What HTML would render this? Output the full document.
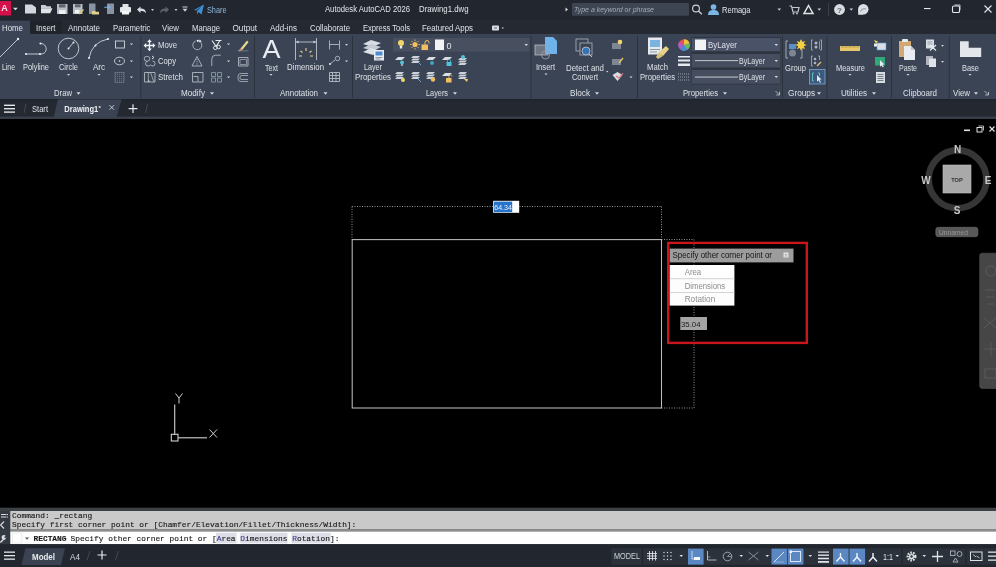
<!DOCTYPE html>
<html><head><meta charset="utf-8">
<style>
*{margin:0;padding:0;box-sizing:border-box}
html,body{width:996px;height:567px;overflow:hidden;background:#000}
body{position:relative;font-family:"Liberation Sans",sans-serif;font-size:7.9px;color:#dfe3ea}
.a{position:absolute}
.t{position:absolute;white-space:nowrap;line-height:1}
#title{left:0;top:0;width:996px;height:34px;background:#22272f}
#ribbon{left:0;top:34px;width:996px;height:65px;background:#3b4453}
#ftabs{left:0;top:99px;width:996px;height:19px;background:#262b34}
#cmd{left:0;top:508px;width:996px;height:37px;background:#3d4345}
#status{left:0;top:545px;width:996px;height:22px;background:#22272f}
.sep{position:absolute;top:36px;width:1px;height:62px;background:#2e3540}
.ptitle{position:absolute;top:88px;line-height:1;white-space:nowrap;color:#d5dae2}
.dd{position:absolute;width:0;height:0;border-left:2.5px solid transparent;border-right:2.5px solid transparent;border-top:3px solid #d0d4da}
svg{position:absolute;overflow:visible}
</style></head><body>
<svg width="996" height="567" viewBox="0 0 996 567" style="position:absolute;left:0;top:0;will-change:transform" font-family="Liberation Sans, sans-serif">
<rect width="996" height="567" fill="#000"/>
<!-- TITLE BAR -->
<rect x="0" y="0" width="996" height="34" fill="#22272f"/>
<rect x="0" y="1" width="11" height="14.5" fill="#d4104a"/>
<text x="4.4" y="11.3" font-size="9" font-weight="bold" fill="#f8e4ec" text-anchor="middle">A</text>
<path d="M13 7.7h4.8l-2.4 2.6z" fill="#dfe3e8"/>
<!-- new -->
<path d="M25 4.5h7l4 3v6h-11z" fill="#d3d7dd"/>
<!-- open -->
<path d="M41 5h4.5l1 1.2h4.5v2h-10z" fill="#c9cdd4"/><path d="M41 8.2h11.5l-2.3 5h-9.2z" fill="#dfe2e7"/>
<!-- save -->
<rect x="57" y="4" width="10.5" height="10" fill="#b9bec6"/><rect x="59" y="4.3" width="6.5" height="3.2" fill="#5d6573"/><rect x="59" y="10.2" width="6.5" height="3.8" fill="#f0f2f4"/>
<!-- save as -->
<rect x="73" y="4" width="9.5" height="10" fill="#b9bec6"/><rect x="75" y="4.3" width="5.5" height="3" fill="#5d6573"/><rect x="75" y="10" width="4.5" height="3.5" fill="#f0f2f4"/><path d="M78.5 13.5l4.5-4.5 1 1-4.5 4.5z" fill="#d9c97a"/>
<!-- doc with folder -->
<rect x="89" y="3.5" width="6.5" height="10.5" rx="0.6" fill="#8a93a3"/><path d="M92 11h3l.8.8h3.2v2.7h-7z" fill="#e0d08a"/>
<!-- doc with arrow -->
<rect x="107" y="3.5" width="7" height="10.5" rx="0.6" fill="#8a93a3"/><path d="M104.3 7.2h5M108 5.8l1.8 1.4-1.8 1.4" stroke="#79b4ea" stroke-width="1.1" fill="none"/>
<!-- print -->
<rect x="122.5" y="4" width="6" height="3" fill="#dfe2e6"/><rect x="120" y="7" width="11" height="5.5" rx="1" fill="#e6e8ec"/><rect x="122" y="11" width="7" height="3.5" fill="#f4f5f7"/>
<!-- undo -->
<path d="M137 9.5l3.5-3v2c3 0 5.5 1 5.5 5-1-2-3-2.5-5.5-2.5v2z" fill="#d7dbe1"/>
<path d="M151 9h3l-1.5 2z" fill="#c9ced6"/>
<!-- redo -->
<path d="M169 9.5l-3.5-3v2c-3 0-5.5 1-5.5 5 1-2 3-2.5 5.5-2.5v2z" fill="#5b626d"/>
<path d="M174.5 9h3l-1.5 2z" fill="#c9ced6"/>
<!-- customize -->
<path d="M182.5 7h5" stroke="#c9ced6" stroke-width="1"/><path d="M182.5 8.7h5l-2.5 3z" fill="#c9ced6"/>
<!-- share -->
<path d="M194 10l10-5.5-2.5 10-3-2.5-1.5 2.5v-3.5l4.5-4.5-5.5 4z" fill="#3d8fd6"/>
<text x="207" y="12.5" font-size="8.4" fill="#8db6dc" textLength="19.5" lengthAdjust="spacingAndGlyphs">Share</text>
<!-- title -->
<text x="325" y="12.3" font-size="8.4" fill="#e3e6eb" textLength="85" lengthAdjust="spacingAndGlyphs">Autodesk AutoCAD 2026</text>
<text x="419" y="12.3" font-size="8.4" fill="#e3e6eb" textLength="49.5" lengthAdjust="spacingAndGlyphs">Drawing1.dwg</text>
<!-- search -->
<path d="M565.5 7.5v4l2.5-2z" fill="#d5d9df"/>
<rect x="572" y="3" width="117" height="12.7" rx="1" fill="#3e4552"/>
<text x="574" y="12" font-size="7.2" font-style="italic" fill="#a3abb7" textLength="80" lengthAdjust="spacingAndGlyphs">Type a keyword or phrase</text>
<circle cx="696" cy="8.5" r="3.4" fill="none" stroke="#d0d4da" stroke-width="1.1"/><path d="M698.5 11l3.3 3.3" stroke="#d0d4da" stroke-width="1.3"/>
<!-- user -->
<circle cx="713.5" cy="7" r="2.8" fill="#79b6e6"/><path d="M708 15c0-4 2.5-5 5.5-5s5.5 1 5.5 5z" fill="#79b6e6"/>
<text x="722" y="12.5" font-size="8.4" fill="#e3e6eb" textLength="28.5" lengthAdjust="spacingAndGlyphs">Remaga</text>
<path d="M777.5 8.5h3.5l-1.75 2.2z" fill="#c9ced6"/>
<!-- cart -->
<path d="M789.5 6h2l1.5 6h5l1-4.5h-6.5" fill="none" stroke="#c3c8cf" stroke-width="1.2"/><circle cx="793.5" cy="13.5" r="0.9" fill="#c3c8cf"/><circle cx="797" cy="13.5" r="0.9" fill="#c3c8cf"/>
<!-- triangle icon -->
<path d="M808.5 5.5l4.5 8h-9z" fill="none" stroke="#e0e3e8" stroke-width="1.5"/>
<path d="M817.5 8.5h3.5l-1.75 2.2z" fill="#c9ced6"/>
<rect x="828" y="3" width="1" height="13" fill="#3a404b"/>
<!-- help -->
<circle cx="839.5" cy="9.5" r="5.4" fill="#d8dbe0"/><text x="839.5" y="12.5" font-size="8" font-weight="bold" fill="#5f6670" text-anchor="middle">?</text>
<path d="M849.5 8.5h3.5l-1.75 2.2z" fill="#c9ced6"/>
<!-- chat -->
<circle cx="863.3" cy="9.3" r="5.2" fill="#dcdfe4"/><path d="M858.2 9.5v5.2h5z" fill="#dcdfe4"/><path d="M860.5 11.5c1-2.5 3.5-3.5 5.5-2.5" stroke="#9aa0a8" stroke-width="1.1" fill="none"/>
<!-- window controls -->
<rect x="924" y="8" width="6.5" height="1.1" fill="#e4e7eb"/>
<rect x="952.5" y="6" width="7" height="6.5" rx="1.3" fill="none" stroke="#e4e7eb" stroke-width="1.1"/><path d="M954.5 5h5.5v5" fill="none" stroke="#e4e7eb" stroke-width="0.8"/>
<path d="M984.5 5.5l7 7M991.5 5.5l-7 7" stroke="#e4e7eb" stroke-width="1.1"/>
<!-- TABS -->
<rect x="0" y="20" width="996" height="14" fill="#242932"/><rect x="30.5" y="20.8" width="31" height="12.8" rx="1.5" fill="#1f232a"/><rect x="0" y="20.7" width="30" height="14" fill="#3b4455"/>
<g font-size="8.4" fill="#dfe3e9">
<text x="2" y="31" textLength="21" lengthAdjust="spacingAndGlyphs">Home</text>
<text x="36" y="31" textLength="19.5" lengthAdjust="spacingAndGlyphs">Insert</text>
<text x="68" y="31" textLength="32" lengthAdjust="spacingAndGlyphs">Annotate</text>
<text x="113" y="31" textLength="37.5" lengthAdjust="spacingAndGlyphs">Parametric</text>
<text x="162" y="31" textLength="17" lengthAdjust="spacingAndGlyphs">View</text>
<text x="192" y="31" textLength="28" lengthAdjust="spacingAndGlyphs">Manage</text>
<text x="232.5" y="31" textLength="24.5" lengthAdjust="spacingAndGlyphs">Output</text>
<text x="270" y="31" textLength="27" lengthAdjust="spacingAndGlyphs">Add-ins</text>
<text x="310" y="31" textLength="40" lengthAdjust="spacingAndGlyphs">Collaborate</text>
<text x="363" y="31" textLength="47" lengthAdjust="spacingAndGlyphs">Express Tools</text>
<text x="422" y="31" textLength="51" lengthAdjust="spacingAndGlyphs">Featured Apps</text>
</g>
<rect x="492" y="25.5" width="7" height="5" rx="0.8" fill="#d9dde3"/><path d="M494 28h3" stroke="#3b4453" stroke-width="0.8"/>
<path d="M501.5 27.5h2.5l-1.25 1.6z" fill="#c9ced6"/>
<!-- RIBBON -->
<rect x="0" y="34" width="996" height="65" fill="#3b4455"/>
<g fill="#2c323c">
<rect x="140.3" y="36" width="1" height="62"/><rect x="254" y="36" width="1" height="62"/><rect x="352" y="36" width="1" height="62"/>
<rect x="530.5" y="36" width="1" height="62"/><rect x="637" y="36" width="1" height="62"/><rect x="782" y="36" width="1" height="62"/>
<rect x="826.5" y="36" width="1" height="62"/><rect x="891" y="36" width="1" height="62"/><rect x="948.8" y="36" width="1" height="62"/>
</g>
<g fill="#dde1e7" font-size="8.4">
<!-- draw labels -->
<text x="2" y="70.3" textLength="13" lengthAdjust="spacingAndGlyphs">Line</text>
<text x="23" y="70.3" textLength="26" lengthAdjust="spacingAndGlyphs">Polyline</text>
<text x="59" y="70.3" textLength="19" lengthAdjust="spacingAndGlyphs">Circle</text>
<text x="93" y="70.3" textLength="12" lengthAdjust="spacingAndGlyphs">Arc</text>
<text x="54" y="95.7" textLength="18" lengthAdjust="spacingAndGlyphs">Draw</text>
<!-- modify labels -->
<text x="158" y="47.8" textLength="19" lengthAdjust="spacingAndGlyphs">Move</text>
<text x="158" y="64.3" textLength="18" lengthAdjust="spacingAndGlyphs">Copy</text>
<text x="158" y="80.3" textLength="25" lengthAdjust="spacingAndGlyphs">Stretch</text>
<text x="181" y="95.7" textLength="24" lengthAdjust="spacingAndGlyphs">Modify</text>
<!-- annotation -->
<text x="265" y="70.5" textLength="13" lengthAdjust="spacingAndGlyphs">Text</text>
<text x="287" y="70" textLength="37" lengthAdjust="spacingAndGlyphs">Dimension</text>
<text x="280" y="95.7" textLength="38" lengthAdjust="spacingAndGlyphs">Annotation</text>
<!-- layers -->
<text x="364" y="70" textLength="18" lengthAdjust="spacingAndGlyphs">Layer</text>
<text x="355" y="79.5" textLength="36" lengthAdjust="spacingAndGlyphs">Properties</text>
<text x="426" y="95.7" textLength="22" lengthAdjust="spacingAndGlyphs">Layers</text>
<!-- block -->
<text x="536" y="70" textLength="19" lengthAdjust="spacingAndGlyphs">Insert</text>
<text x="566" y="70.5" textLength="38" lengthAdjust="spacingAndGlyphs">Detect and</text>
<text x="572" y="79.5" textLength="26" lengthAdjust="spacingAndGlyphs">Convert</text>
<text x="570" y="95.7" textLength="20" lengthAdjust="spacingAndGlyphs">Block</text>
<!-- properties -->
<text x="647" y="70" textLength="21" lengthAdjust="spacingAndGlyphs">Match</text>
<text x="640" y="79.5" textLength="35" lengthAdjust="spacingAndGlyphs">Properties</text>
<text x="683" y="95.7" textLength="35" lengthAdjust="spacingAndGlyphs">Properties</text>
<!-- groups -->
<text x="785" y="70.5" textLength="21" lengthAdjust="spacingAndGlyphs">Group</text>
<text x="788" y="95.7" textLength="27" lengthAdjust="spacingAndGlyphs">Groups</text>
<!-- utilities -->
<text x="836" y="70.5" textLength="29" lengthAdjust="spacingAndGlyphs">Measure</text>
<text x="841" y="95.7" textLength="26" lengthAdjust="spacingAndGlyphs">Utilities</text>
<!-- clipboard -->
<text x="899" y="70.5" textLength="18" lengthAdjust="spacingAndGlyphs">Paste</text>
<text x="903" y="95.7" textLength="34" lengthAdjust="spacingAndGlyphs">Clipboard</text>
<!-- view -->
<text x="962" y="70.5" textLength="17" lengthAdjust="spacingAndGlyphs">Base</text>
<text x="953" y="95.7" textLength="17" lengthAdjust="spacingAndGlyphs">View</text>
</g>
<!-- panel title triangles & dropdowns -->
<g fill="#d5d9df">
<path d="M76.5 92.3h4l-2 2.4z"/><path d="M210 92.3h4l-2 2.4z"/><path d="M323.5 92.3h4l-2 2.4z"/><path d="M453 92.3h4l-2 2.4z"/>
<path d="M595 92.3h4l-2 2.4z"/><path d="M723 92.3h4l-2 2.4z"/><path d="M817 92.3h4l-2 2.4z"/><path d="M872 92.3h4l-2 2.4z"/><path d="M974 92.3h4l-2 2.4z"/>
<path d="M67 74h3l-1.5 1.8z"/><path d="M97.5 74h3l-1.5 1.8z"/><path d="M269.5 74h3l-1.5 1.8z"/><path d="M544.5 73.5h3l-1.5 1.8z"/>
<path d="M848.5 74h3l-1.5 1.8z"/><path d="M906.5 74h3l-1.5 1.8z"/><path d="M968.5 74h3l-1.5 1.8z"/><path d="M606 71h2.4l-1.2 1.5z"/>
<path d="M130 43.5h3l-1.5 1.8z"/><path d="M130 60.5h3l-1.5 1.8z"/><path d="M130 76.5h3l-1.5 1.8z"/>
<path d="M227 43.5h3l-1.5 1.8z"/><path d="M227 60.5h3l-1.5 1.8z"/><path d="M227 76.5h3l-1.5 1.8z"/>
<path d="M345 44h3l-1.5 1.8z"/><path d="M345 60.5h3l-1.5 1.8z"/>
<path d="M629.5 76.5h3l-1.5 1.8z"/><path d="M941 45h3l-1.5 1.8z"/><path d="M941 61h3l-1.5 1.8z"/>
</g>
<g fill="none" stroke="#c8ced6" stroke-width="0.8">
<path d="M775.5 91l3.5 3.5M779.5 91.8v3.2h-3.2" stroke-width="0.8"/>
<path d="M984.5 91l3.5 3.5M988.5 91.8v3.2h-3.2" stroke-width="0.8"/>
</g>
<!-- DRAW ICONS -->
<g stroke="#cfd5dd" stroke-width="0.9" fill="none">
<path d="M0 57L18 39"/>
<path d="M26 54H41C48 54 48 43.5 40.5 43.5"/>
<circle cx="68.5" cy="48.5" r="10.3"/><path d="M68.5 48.5L73.5 42.5"/>
<path d="M89 58Q92 42 108 39"/>
<rect x="115.5" y="41" width="9" height="7"/>
<ellipse cx="119.5" cy="61" rx="5" ry="3.8"/>
</g>
<g fill="#e8ecf0">
<circle cx="18" cy="39" r="1.2"/><circle cx="26" cy="54" r="1.1"/><circle cx="40" cy="54" r="1.1"/><circle cx="40.5" cy="43.5" r="1.1"/>
<circle cx="68.5" cy="48.5" r="1"/><circle cx="73.5" cy="42.5" r="1"/><circle cx="89" cy="58" r="1.1"/><circle cx="108" cy="39" r="1.1"/><circle cx="95.5" cy="45.5" r="1"/>
<circle cx="119.5" cy="61" r="0.8"/>
</g>
<g stroke="#8e9aa8" stroke-width="0.6" stroke-dasharray="0.9 0.9"><path d="M115.5 72.5v10M117.5 72.5v10M119.5 72.5v10M121.5 72.5v10M123.5 72.5v10"/></g><rect x="115" y="72.5" width="9" height="10" fill="none" stroke="#7f8a98" stroke-width="0.5"/>
<!-- MODIFY ICONS -->
<g stroke="#eef1f4" stroke-width="1.4" fill="none"><path d="M149.5 41v9M145 45.5h9"/></g>
<g fill="#eef1f4"><path d="M149.5 39.3l2.4 2.6h-4.8z"/><path d="M149.5 51.2l2.4-2.6h-4.8z"/><path d="M143.6 45.5l2.6-2.4v4.8z"/><path d="M155.4 45.5l-2.6-2.4v4.8z"/></g>
<g stroke="#bfc6cf" stroke-width="0.8" fill="none">
<rect x="144.3" y="56.5" width="5.5" height="4.5" rx="2"/><path d="M147.5 61.5q-2 0-2 2.2t2.5 2.3q1.5 0 2.5-1q1 1 2.5 1q2 0 2-2.5t-2.5-2.5"/><path d="M152 56l2 1.5-2 1.5" stroke="#e8ecf0" stroke-width="0.9"/>
<path d="M144.5 72.5h10.5v9.5h-10.5z"/><path d="M148.3 72.5v9.5M150.5 72.5l3.5 9.5" stroke-width="0.7"/><path d="M147.5 82l1.2-2.5 1.2 2.5z" fill="#bfc6cf" stroke="none"/>
<path d="M200.3 41.8a4.5 4.5 0 1 1-4.6-0.8"/>
<path d="M197 56.5l5 9.5h-10z"/><path d="M197 59v6" stroke-dasharray="1 0.8"/>
<path d="M192.5 72.5h10.5v9.5h-10.5z"/><path d="M193.5 76.5h4.5v5" />
<path d="M211.8 66v-7q0-3.5 3.5-3.8h5.5"/>
<path d="M238.5 57.5h9.5v8.5h-9.5z"/><path d="M240 59.5h6.5v5h-6.5z" stroke-width="0.6"/>
<path d="M248 73.5h-8q-2 0-2 4t2 4h8M248 75.5h-7q-1 0-1 2t1 2h7" stroke-width="0.7"/>
</g>
<g stroke="#8fa3a8" stroke-width="0.8" fill="none"><path d="M211.5 72.5h4v4h-4zM217.5 72.5h4v4h-4zM211.5 78h4v4h-4zM217.5 78h4v4h-4z"/></g>
<circle cx="197.8" cy="40.8" r="1.1" fill="#f0f2f5"/><path d="M199.5 39.5l2.2 1.8-2.6 1.3z" fill="#f0f2f5"/>
<path d="M212 40.5l4.5 6.5M215.5 40.5h6M220 40.5l-4 6" stroke="#e8ecf0" stroke-width="1.1" fill="none"/>
<circle cx="215.3" cy="47.8" r="1.8" fill="none" stroke="#e8ecf0" stroke-width="0.9"/><circle cx="218.6" cy="47" r="1.8" fill="none" stroke="#e8ecf0" stroke-width="0.9"/>
<path d="M240.5 48.5l6.5-8 1.5 1.8-6.5 8z" fill="#e6dc8a"/><path d="M238.5 50.5l2-2 1.5 1.8-2.2 1.2z" fill="#e08a6a"/><path d="M237.5 50.8h11" stroke="#8f97a3" stroke-width="0.6"/>
<!-- ANNOTATION ICONS -->
<text x="271.5" y="58.3" font-size="26" fill="#e9ecf0" text-anchor="middle" textLength="18" lengthAdjust="spacingAndGlyphs">A</text>
<g stroke="#cdd3db" stroke-width="0.8" fill="none"><path d="M295.5 38v22M316.5 38v22M296 42h20"/></g>
<g fill="#cdd3db"><path d="M296 42l2.5-1.5v3z"/><path d="M316 42l-2.5-1.5v3z"/></g>
<g stroke="#e8d58a" stroke-width="1.1"><path d="M306 48v3M300.5 51l2 1.5M311.5 51l-2 1.5M299 56h3M310 56h3"/></g>
<g stroke="#c3c9d1" stroke-width="0.8" fill="none">
<path d="M329.5 40.5v9M339.5 40.5v9M330 44.5h9"/>
<path d="M330 64l5-4"/><circle cx="337.5" cy="58.5" r="2.2"/>
<path d="M329.5 72.5h10v9h-10zM329.5 75.5h10M329.5 78.5h10M332.5 72.5v9M336 72.5v9"/>
</g>
<circle cx="330" cy="64" r="1" fill="#e6e9ed"/>
<!-- LAYERS -->
<g>
<path d="M363 44l8-4 10 3-8 4z" fill="#d8dde3"/><path d="M363 48l8-4 10 3-8 4z" fill="#c5cbd3"/><path d="M363 52l8-4 10 3-8 4z" fill="#dde2e8"/>
<rect x="374" y="50" width="10" height="10.5" fill="#e9ecf0"/><rect x="375.5" y="51.5" width="7" height="4" fill="#4e8bd0"/><path d="M375.5 57.5h7M375.5 59h5" stroke="#5b6370" stroke-width="0.6"/>
</g>
<rect x="393" y="38" width="136.5" height="13.6" fill="#485060"/>
<circle cx="401" cy="43" r="3" fill="#f0d56a"/><rect x="399.8" y="46" width="2.4" height="2.5" fill="#e8eaf0"/>
<circle cx="415" cy="44.5" r="2.6" fill="#f0c060"/><g stroke="#f0c060" stroke-width="0.9"><path d="M415 39.5v1.5M415 48v1.5M410 44.5h1.5M418.5 44.5h1.5M411.5 41l1 1M417.5 47l1 1M418.5 41l-1 1M412.5 47l-1 1"/></g>
<rect x="421.5" y="44.5" width="6.5" height="5.5" fill="#f0c060"/><path d="M425 44.5v-2a2 2 0 0 1 4 0v1" fill="none" stroke="#f0c060" stroke-width="1"/>
<rect x="435" y="39.5" width="9" height="10.5" fill="#f2f3f5"/>
<text x="446.5" y="48.5" font-size="9" fill="#e3e6ea">0</text>
<path d="M524.5 44h3.5l-1.75 2z" fill="#d5d9df"/>
<g>
<path d="M395 60l3-3h7l-3 3z" fill="#d9dee4"/><circle cx="402" cy="62.5" r="2" fill="#4fc2d8"/><rect x="401.3" y="64.2" width="1.4" height="1.6" fill="#e0e4ea"/>
<path d="M411 58l2-2h7l-2 2zM411 60.5l2-2h7l-2 2zM411 63l2-2h7l-2 2z" fill="#cdd3db"/><path d="M418 62l3 3" stroke="#6ea8df" stroke-width="1"/>
<path d="M426 60l3-3h7l-3 3z" fill="#d9dee4"/><circle cx="432" cy="63" r="2" fill="#3fa6c0"/>
<path d="M442 60l3-3h7l-3 3z" fill="#d9dee4"/><rect x="446.5" y="62" width="5" height="4" fill="#4fc2d8"/><path d="M447.5 62v-1.3a1.5 1.5 0 0 1 3 0v1.3" fill="none" stroke="#4fc2d8" stroke-width="0.8"/>
<path d="M458 60l2-2h7l-2 2zM458 62.5l2-2h7l-2 2zM458 65l2-2h7l-2 2z" fill="#cdd3db"/><circle cx="463" cy="57" r="2" fill="#4fc2d8"/>
<path d="M395 74l2-2h7l-2 2zM395 76.5l2-2h7l-2 2zM395 79l2-2h7l-2 2z" fill="#cdd3db"/><circle cx="403" cy="80" r="2" fill="#f0d56a"/>
<path d="M411 74l2-2h7l-2 2zM411 76.5l2-2h7l-2 2zM411 79l2-2h7l-2 2z" fill="#cdd3db"/><path d="M418 79l3 3" stroke="#6ea8df" stroke-width="1"/>
<path d="M426 74l2-2h7l-2 2zM426 76.5l2-2h7l-2 2zM426 79l2-2h7l-2 2z" fill="#cdd3db"/><circle cx="433" cy="79.5" r="2.2" fill="#f0c060"/>
<path d="M442 76l3-3h7l-3 3z" fill="#d9dee4"/><rect x="446" y="78" width="5.5" height="4.5" fill="#f0c060"/><path d="M449 78v-1.5a1.5 1.5 0 0 1 3 0" fill="none" stroke="#f0c060" stroke-width="0.8"/>
<path d="M458 74l2-2h7l-2 2zM458 76.5l2-2h7l-2 2zM458 79l2-2h7l-2 2z" fill="#cdd3db"/><path d="M464 79l3 3 1-3z" fill="#f0d56a"/>
</g>
<!-- BLOCK -->
<rect x="535" y="45" width="13" height="10" fill="#6f7682" stroke="#c5cbd3" stroke-width="0.7"/><path d="M545 37h8l4 4v13h-12z" fill="#6fb3ea"/><circle cx="545.5" cy="55" r="4" fill="none" stroke="#9aa0aa" stroke-width="0.9"/>
<rect x="576" y="39" width="12" height="12" fill="none" stroke="#aeb5bf" stroke-width="0.8"/><rect x="580" y="43" width="12" height="12" fill="#3b4352" stroke="#aeb5bf" stroke-width="0.8"/><circle cx="586" cy="51" r="4" fill="#3573b5" stroke="#c5cbd3" stroke-width="0.8"/><path d="M589 54l3 3" stroke="#c5cbd3" stroke-width="1"/>
<rect x="612" y="43" width="9" height="6" fill="#7e8692"/><circle cx="620" cy="42" r="2.3" fill="#f0d56a"/>
<rect x="612" y="59" width="9" height="6" fill="#7e8692"/><path d="M619 63l4-5" stroke="#f0c060" stroke-width="1.3"/>
<path d="M612.5 75l5 6 5-6-5-3z" fill="#d9dee4"/><path d="M616 76l3 2 4-5" stroke="#e07080" stroke-width="1.2" fill="none"/>
<!-- PROPERTIES -->
<rect x="648" y="37.5" width="14" height="17" fill="#e6e9ed"/><rect x="650" y="40" width="10" height="7" fill="#7cb2e0"/><path d="M650 49.5h10M650 52h7" stroke="#6b7380" stroke-width="0.7"/>
<path d="M659 52l7-6 3 3-6 7z" fill="#e8d18a"/><path d="M656 57l3-5 4 4-5 3z" fill="#d8c17a"/>
<circle cx="684" cy="45" r="5.8" fill="#e05060"/><path d="M684 45l0-5.8a5.8 5.8 0 0 1 5.5 4z" fill="#f0c040"/><path d="M684 45l5.5-1.8a5.8 5.8 0 0 1-2.3 6.6z" fill="#60c060"/><path d="M684 45l3.2 4.8a5.8 5.8 0 0 1-7 -0.5z" fill="#4090e0"/><path d="M684 45l-3.8 4.3a5.8 5.8 0 0 1-1.5-6.5z" fill="#a060d0"/>
<g fill="#e6e9ed"><rect x="678" y="56" width="12" height="1.5"/><rect x="678" y="59.5" width="12" height="2"/><rect x="678" y="63.5" width="12" height="2.5"/></g>
<g stroke="#aeb5bf" stroke-width="0.8" stroke-dasharray="1 1"><path d="M678 74h12M678 77h12M678 80h12"/></g>
<rect x="691.5" y="37" width="89" height="47.5" fill="#2f3540"/>
<rect x="692" y="38" width="88" height="13.2" fill="#4a5267"/>
<rect x="692" y="54" width="88" height="13.5" fill="#454d5e"/>
<rect x="692" y="70" width="88" height="13.7" fill="#454d5e"/>
<rect x="695" y="39.5" width="11" height="10.5" fill="#f2f3f5"/>
<g fill="#dde1e7" font-size="8.4">
<text x="708" y="48" textLength="29" lengthAdjust="spacingAndGlyphs">ByLayer</text>
<text x="739" y="64" textLength="26" lengthAdjust="spacingAndGlyphs">ByLayer</text>
<text x="739" y="80.3" textLength="26" lengthAdjust="spacingAndGlyphs">ByLayer</text>
</g>
<rect x="695" y="60.2" width="43" height="0.9" fill="#d5d9df"/><rect x="695" y="76.6" width="43" height="0.9" fill="#d5d9df"/>
<g fill="#d5d9df"><path d="M774.5 44h3.5l-1.75 2z"/><path d="M774.5 60h3.5l-1.75 2z"/><path d="M774.5 76h3.5l-1.75 2z"/></g>
<!-- GROUPS -->
<path d="M788 41h-2v17h2M800 41h2v17h-2" fill="none" stroke="#aeb5bf" stroke-width="0.9"/><rect x="789" y="44" width="7" height="5" fill="#5a8fc8"/><circle cx="792.5" cy="53" r="3.5" fill="#7e8692"/>
<g fill="#f5d040"><path d="M801 39l1.2 3 3-1-1.5 2.8 3 1.2-3 1.2 1.5 2.8-3-1-1.2 3-1.2-3-3 1 1.5-2.8-3-1.2 3-1.2-1.5-2.8 3 1z"/></g>
<path d="M813 40h-1.5v10h1.5M820 40h1.5v10h-1.5" fill="none" stroke="#aeb5bf" stroke-width="0.8"/><circle cx="816" cy="43" r="1.5" fill="#aeb5bf"/><circle cx="816" cy="47" r="1.5" fill="#aeb5bf"/><path d="M819.5 41v8" stroke="#e07080" stroke-width="1"/>
<path d="M813 56h-1.5v10h1.5M818 56h1.5v4" fill="none" stroke="#aeb5bf" stroke-width="0.8"/><circle cx="815" cy="59" r="1.3" fill="#aeb5bf"/><circle cx="815" cy="63" r="1.3" fill="#aeb5bf"/><path d="M817 66l4-4" stroke="#e0c080" stroke-width="1.3"/>
<rect x="809.5" y="69.5" width="15.5" height="14.5" fill="#3d5a7e" stroke="#7ba6d6" stroke-width="0.8"/><path d="M814 73h-1.5v8h1.5M818 73h1.5v3" fill="none" stroke="#6fd0c0" stroke-width="0.8"/><path d="M817 75l4.5 4.5-2 .3 1.5 2.5-1 .5-1.5-2.5-1.5 1.5z" fill="#e8ecf0"/>
<!-- UTILITIES -->
<rect x="840" y="46" width="20" height="5" fill="#e8c66a"/><path d="M842 46v2M844 46v1.5M846 46v2M848 46v1.5M850 46v2M852 46v1.5M854 46v2M856 46v1.5M858 46v2" stroke="#7a6530" stroke-width="0.5"/>
<rect x="877" y="43" width="9" height="7" fill="#d9dee4" stroke="#5a9ad6" stroke-width="0.6"/><path d="M874 40l2 3.5 2-2z" fill="#f0d56a"/><rect x="874" y="43.5" width="3" height="3" fill="#e8ecf0"/>
<rect x="875" y="57" width="10" height="8.5" fill="#2fa87a"/><path d="M880 60l4.5 4.5-2 .3 1.3 2-1 .6-1.3-2-1.5 1.3z" fill="#e8ecf0"/>
<rect x="876" y="72" width="9" height="11" fill="#d9dee4"/><path d="M877.5 74.5h6M877.5 76.5h6M877.5 78.5h6M877.5 80.5h6" stroke="#5b6370" stroke-width="0.8"/>
<!-- CLIPBOARD -->
<rect x="899" y="41" width="12" height="16" fill="#d4a874"/><rect x="902" y="39" width="6" height="3" rx="1" fill="#e8ecf0"/><path d="M904 46h7l4 4v10h-11z" fill="#e9ecf0"/><path d="M911 46v4h4" fill="#c0c6ce"/>
<rect x="926" y="39.5" width="8" height="9" fill="#d9dee4"/><path d="M927.5 42h5M927.5 44h5" stroke="#6b7380" stroke-width="0.6"/><path d="M930 45l6 5.5M936 45l-6 5.5" stroke="#e8ecf0" stroke-width="1.2"/>
<rect x="926" y="56" width="7" height="9" fill="#aeb5bf"/><rect x="929" y="58.5" width="7" height="8.5" fill="#dfe3e8"/>
<!-- VIEW -->
<path d="M960 41.2h8.7v6.6h12.5v9.2h-21.2z" fill="#e3e6ea"/>
<!-- FILE TABS -->
<rect x="0" y="99" width="996" height="20" fill="#232831"/>
<rect x="0" y="99" width="996" height="1.5" fill="#1f242c"/><rect x="0" y="116.5" width="996" height="2.5" fill="#383e4a"/>
<path d="M57.8 99.5H121.5L116.5 117.5H53.8z" fill="#3b4352"/>
<g fill="#e3e6ea"><rect x="4" y="104.6" width="11" height="1.4"/><rect x="4" y="108" width="11" height="1.4"/><rect x="4" y="111.4" width="11" height="1.4"/></g>
<path d="M26 104l-2 9M147.5 104l-2 9" stroke="#4a5160" stroke-width="0.8"/>
<text x="32" y="111.6" font-size="8.4" fill="#dfe3e8" textLength="16" lengthAdjust="spacingAndGlyphs">Start</text>
<text x="64.3" y="111.6" font-size="8.4" font-weight="bold" fill="#eef0f3" textLength="34" lengthAdjust="spacingAndGlyphs">Drawing1</text>
<text x="98.6" y="109.5" font-size="6" font-weight="bold" fill="#eef0f3">*</text>
<path d="M109.5 105.2l4.5 4.5M114 105.2l-4.5 4.5" stroke="#d5d9df" stroke-width="0.9"/>
<path d="M133 104.3v8.8M128.6 108.7h8.8" stroke="#e8ebef" stroke-width="1.2"/>
<!-- DRAWING -->
<g stroke="#a0a0a0" stroke-width="0.9" stroke-dasharray="1 1.5" fill="none">
<path d="M352 206.5H661.5"/><path d="M352 206.5V239.5"/><path d="M661.5 206.5V239.5"/>
<path d="M694 239.5V408"/><path d="M661.5 239.5H694"/><path d="M661.5 408H694"/>
</g>
<rect x="352.2" y="239.6" width="309.3" height="168.4" fill="none" stroke="#bdbdbd" stroke-width="1.05"/>
<rect x="493.2" y="200.8" width="26" height="12" fill="#fff"/>
<rect x="494" y="201.6" width="18.2" height="10.6" fill="#2673c9"/>
<text x="494.3" y="210" font-size="7.6" fill="#e8f2ff" textLength="17.6" lengthAdjust="spacingAndGlyphs">64.34</text>
<!-- red box -->
<rect x="668.2" y="242.9" width="138.6" height="100" fill="none" stroke="#c8161c" stroke-width="2.4"/>
<rect x="669.7" y="248.6" width="123.8" height="13.8" fill="#9c9c9c"/>
<text x="672.5" y="258" font-size="8.4" fill="#161616" textLength="99.5" lengthAdjust="spacingAndGlyphs">Specify other corner point or</text>
<rect x="783.5" y="252.5" width="5" height="5" fill="#e4e4e4"/><path d="M784.8 254.5h2.4M784.8 256h2.4" stroke="#888" stroke-width="0.6"/>
<rect x="669.7" y="265" width="64.7" height="40.6" fill="#fdfdfd"/>
<path d="M669.7 278.7h64.7M669.7 292.5h64.7" stroke="#c8c8c8" stroke-width="0.8"/>
<g font-size="8.4" fill="#8c8c8c">
<text x="684.7" y="274.8" textLength="16.5" lengthAdjust="spacingAndGlyphs">Area</text>
<text x="684.7" y="288.5" textLength="40.5" lengthAdjust="spacingAndGlyphs">Dimensions</text>
<text x="684.7" y="302" textLength="30.5" lengthAdjust="spacingAndGlyphs">Rotation</text>
</g>
<rect x="680.3" y="317" width="26.7" height="13" fill="#a4a4a4"/>
<text x="681" y="326.8" font-size="7.6" fill="#1a1a1a" textLength="19.5" lengthAdjust="spacingAndGlyphs">35.04</text>
<!-- UCS -->
<g stroke="#d2d2d2" stroke-width="1.1" fill="none">
<path d="M174.7 404.5V434.5"/><path d="M178 437.8H207"/><rect x="171.3" y="434.3" width="6.7" height="6.7"/>
<path d="M175.5 393.5l3.5 4.5 3.5-4.5M179 398v5.5" stroke-width="1"/>
<path d="M209.5 429.5l7.5 8M217 429.5l-7.5 8" stroke-width="1"/>
</g>
<!-- window controls in drawing -->
<g fill="#e0e0e0"><rect x="964" y="129.5" width="6" height="1.6"/></g>
<rect x="977" y="127.5" width="5" height="4.5" fill="none" stroke="#e0e0e0" stroke-width="1"/><path d="M978.5 126h5v4.5" fill="none" stroke="#e0e0e0" stroke-width="0.8"/>
<path d="M989.5 126.5l5 5M994.5 126.5l-5 5" stroke="#e0e0e0" stroke-width="1.1"/>
<!-- viewcube -->
<circle cx="957.5" cy="179.3" r="28.9" fill="none" stroke="#363636" stroke-width="6.6"/>
<rect x="943" y="165" width="28" height="28" fill="#a9a9a9"/>
<rect x="943" y="165" width="28" height="28" fill="none" stroke="#c0c0c0" stroke-width="0.6"/>
<text x="957" y="182" font-size="6.2" font-weight="bold" fill="#333" text-anchor="middle" textLength="11.5" lengthAdjust="spacingAndGlyphs">TOP</text>
<g font-size="10" font-weight="bold" fill="#c8c8c8" text-anchor="middle">
<text x="957.5" y="153.3">N</text><text x="957" y="214.3">S</text><text x="926" y="183.8">W</text><text x="988" y="183.8">E</text>
</g>
<rect x="935.8" y="227.3" width="42.1" height="9.4" rx="2.5" fill="#585858" stroke="#707070" stroke-width="0.6"/>
<text x="939" y="234.5" font-size="6.5" fill="#9a9a9a" textLength="29" lengthAdjust="spacingAndGlyphs">Unnamed</text>
<!-- nav bar -->
<rect x="979.7" y="253.2" width="20" height="135.2" rx="2.5" fill="#464646" stroke="#555" stroke-width="0.6"/>
<g stroke="#5c5c5c" stroke-width="0.9" fill="none">
<circle cx="991" cy="271" r="5"/><path d="M985 290h10M986 297h8M987 304h7"/><path d="M984 318l12 10M996 318l-12 10"/><path d="M991 342v14M984 349h12"/><rect x="985" y="369" width="11" height="9"/>
</g>
<!-- COMMAND LINE -->
<rect x="0" y="507.7" width="996" height="37" fill="#3b4144"/>
<rect x="0" y="511" width="10.3" height="33" fill="#343a42"/>
<rect x="10.3" y="511" width="985.7" height="18.5" fill="#c9c9c9"/>
<rect x="10.3" y="529.5" width="985.7" height="2" fill="#8d8d8d"/>
<rect x="10.3" y="531.5" width="985.7" height="12.7" fill="#fefefe"/>
<g fill="#d8dbe0"><rect x="1" y="514" width="5.5" height="1"/><rect x="1" y="516.5" width="5.5" height="1"/><rect x="7" y="514" width="1" height="1"/><rect x="7" y="516.5" width="1" height="1"/></g>
<path d="M4 521.5L0.6 525L4 528.5" stroke="#d8dbe0" stroke-width="1.1" fill="none"/>
<path d="M0.3 542.5l3.8-3.8" stroke="#d8dbe0" stroke-width="1.5" fill="none"/><path d="M3.2 539.5a2.3 2.3 0 1 1 2.6-3.4l-1.6 0.6 0.5 1.4 1.4-0.3a2.3 2.3 0 0 1-2.9 1.7z" fill="#d8dbe0"/>
<g font-family="Liberation Mono, monospace" font-size="7.87" fill="#161616" stroke="#161616" stroke-width="0.12">
<text x="12" y="517.5">Command: _rectang</text>
<text x="12" y="527.3">Specify first corner point or [Chamfer/Elevation/Fillet/Thickness/Width]:</text>
</g>
<rect x="12.5" y="533" width="9.5" height="10" fill="none" stroke="#e4e4e4" stroke-width="0.6"/>
<path d="M25 537.5h4l-2 2.3z" fill="#555"/>
<rect x="216" y="532.8" width="20.5" height="10.6" fill="#dcdde6"/>
<rect x="240.3" y="532.8" width="47.2" height="10.6" fill="#dcdde6"/>
<rect x="291.5" y="532.8" width="39.2" height="10.6" fill="#dcdde6"/>
<g font-family="Liberation Mono, monospace" font-size="7.87" fill="#161616" stroke="#161616" stroke-width="0.12">
<text x="33.5" y="540.8" font-weight="bold" textLength="33" lengthAdjust="spacingAndGlyphs">RECTANG</text>
<text x="70.5" y="540.8">Specify other corner point or [<tspan fill="#4a45b8">A</tspan>rea <tspan fill="#4a45b8">D</tspan>imensions <tspan fill="#4a45b8">R</tspan>otation]:</text>
</g>
<!-- STATUS BAR -->
<rect x="0" y="544.2" width="996" height="22.8" fill="#22272f"/>
<path d="M25.5 548.2H65L61 565H21.5z" fill="#3b4352"/>
<g fill="#e3e6ea"><rect x="4" y="551.5" width="11" height="1.3"/><rect x="4" y="555" width="11" height="1.3"/><rect x="4" y="558.5" width="11" height="1.3"/></g>
<text x="32" y="559.5" font-size="8.4" font-weight="bold" fill="#e6e9ed" textLength="23" lengthAdjust="spacingAndGlyphs">Model</text>
<text x="70" y="559.5" font-size="8.4" fill="#d5d9df" textLength="10" lengthAdjust="spacingAndGlyphs">A4</text>
<path d="M90 551l-3 9M118.5 551l-3 9" stroke="#4a5160" stroke-width="0.8"/>
<path d="M102 550.5v9M97.5 555h9" stroke="#e8ebef" stroke-width="1.2"/>
<rect x="611.4" y="548.4" width="384.6" height="16.3" fill="#2c323c"/>
<g fill="#1f242b"><rect x="642" y="548.4" width="1" height="16.3"/><rect x="901.5" y="548.4" width="1" height="16.3"/><rect x="965.5" y="548.4" width="1" height="16.3"/></g>
<text x="614" y="559.3" font-size="8.4" fill="#cfd3d9" textLength="26" lengthAdjust="spacingAndGlyphs">MODEL</text>
<g stroke="#dfe2e6" stroke-width="0.9" fill="none">
<path d="M649.5 551v9.5M652.5 551v9.5M655.5 551v9.5M647 553.5h10M647 556h10M647 558.5h10"/>
</g>
<g fill="#dfe2e6"><circle cx="664" cy="552.5" r="0.7"/><circle cx="667.5" cy="552.5" r="0.7"/><circle cx="671" cy="552.5" r="0.7"/><circle cx="664" cy="556" r="0.7"/><circle cx="667.5" cy="556" r="0.7"/><circle cx="671" cy="556" r="0.7"/><circle cx="664" cy="559.5" r="0.7"/><circle cx="667.5" cy="559.5" r="0.7"/><circle cx="671" cy="559.5" r="0.7"/></g>
<g fill="#dfe2e6"><path d="M679.5 555h3.5l-1.75 2z"/><path d="M739.5 555h3.5l-1.75 2z"/><path d="M765.5 555h3.5l-1.75 2z"/><path d="M808.5 555h3.5l-1.75 2z"/><path d="M895.5 555h3.5l-1.75 2z"/><path d="M922.5 555h3.5l-1.75 2z"/></g>
<rect x="688" y="548.6" width="15.6" height="16" fill="#5b88c2"/>
<path d="M692 551v8h3" stroke="#cfe2fa" stroke-width="0.9" fill="none"/><rect x="694" y="557" width="6" height="3" fill="#f4f8fd"/>
<path d="M707.5 551v9h9" stroke="#bfc4cb" stroke-width="0.9" fill="none"/><path d="M707.5 557h3" stroke="#bfc4cb" stroke-width="0.6"/>
<circle cx="727.5" cy="556.5" r="4.3" fill="none" stroke="#aab0b8" stroke-width="0.9"/><path d="M727.5 556.5h4M727.5 556.5l3-3" stroke="#aab0b8" stroke-width="0.7"/>
<path d="M748.5 552l10 8M758.5 552l-10 8" stroke="#8d949e" stroke-width="0.9"/>
<rect x="771.5" y="548.6" width="15.6" height="16" fill="#5b88c2"/><path d="M774 562l10-10" stroke="#e8f0fa" stroke-width="0.9"/><path d="M774 562h10" stroke="#a8c6ea" stroke-width="0.6"/>
<rect x="787.8" y="548.6" width="15.6" height="16" fill="#5b88c2"/><rect x="790.5" y="551.5" width="10" height="10" fill="none" stroke="#e8f0fa" stroke-width="0.9"/><rect x="789.5" y="550.5" width="2.5" height="2.5" fill="#e8f0fa"/>
<g fill="#dfe2e6"><rect x="818" y="551.5" width="11" height="1.2"/><rect x="818" y="554.5" width="11" height="1.4"/><rect x="818" y="557.7" width="11" height="1.6"/><rect x="818" y="561" width="11" height="1.8"/></g>
<rect x="833" y="548.6" width="15.6" height="16" fill="#5b88c2"/><rect x="849.5" y="548.6" width="15.6" height="16" fill="#5b88c2"/>
<g stroke="#f2f6fb" stroke-width="1.4" fill="none"><path d="M840.5 553v4l-4 4.5M840.5 557l4 4.5"/><path d="M857 553v4l-4 4.5M857 557l4 4.5"/><path d="M873 553v4l-4 4.5M873 557l4 4.5"/></g>
<text x="883" y="559.5" font-size="8.4" fill="#dfe2e6" textLength="10" lengthAdjust="spacingAndGlyphs">1:1</text>
<circle cx="911.5" cy="556.5" r="3.8" fill="none" stroke="#dfe2e6" stroke-width="2.4" stroke-dasharray="1.6 1.1"/><circle cx="911.5" cy="556.5" r="2.6" fill="#dfe2e6"/><circle cx="911.5" cy="556.5" r="1.2" fill="#2c323c"/>
<path d="M937.5 551v11M932 556.5h11" stroke="#dfe2e6" stroke-width="1.3"/>
<g stroke="#bfc4cb" stroke-width="0.8" fill="none"><rect x="950.5" y="551" width="4.5" height="4.5"/><circle cx="959.5" cy="554" r="2.5"/><path d="M953 562l2.5-4 2.5 4z"/></g>
<rect x="970.5" y="552" width="11.5" height="8.5" fill="none" stroke="#dfe2e6" stroke-width="1"/><path d="M973 554.5l3 2.5M979.5 558l-3-2" stroke="#dfe2e6" stroke-width="0.8"/>
<g fill="#dfe2e6"><rect x="988" y="551.5" width="8" height="1.3"/><rect x="988" y="555.5" width="8" height="1.3"/><rect x="988" y="559.5" width="8" height="1.3"/></g>

</svg>
</body></html>
